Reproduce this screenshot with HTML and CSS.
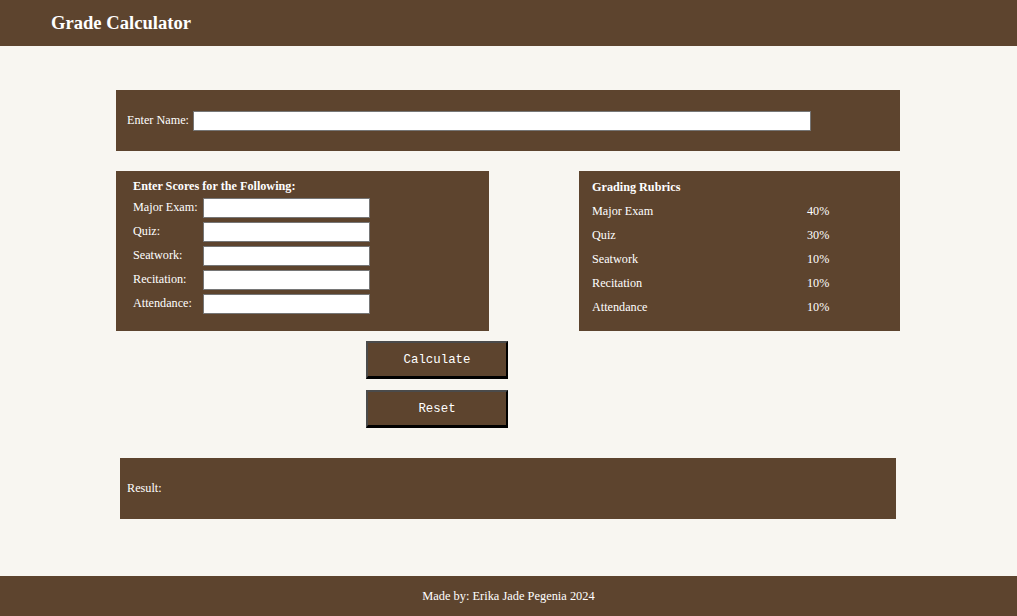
FILE: index.html
```html
<!DOCTYPE html>
<html lang="en">
<head>
    <meta charset="UTF-8">
    <meta name="viewport" content="width=device-width, initial-scale=1.0">
    <title>Grade Calculator</title>
    <link rel="stylesheet" href="styles.css">
</head>
<body>
    <header class="topbar">
        <h1>Grade Calculator</h1>
    </header>

    <main class="content">
        <!-- Name -->
        <div class="panel name-panel">
            <label for="name">Enter Name:</label>
            <input type="text" id="name">
        </div>

        <div class="row">
            <!-- Scores -->
            <div class="panel scores">
                <h3>Enter Scores for the Following:</h3>
                <div class="score-grid">
                    <label for="exam">Major Exam:</label>
                    <input type="number" id="exam">
                    <label for="quiz">Quiz:</label>
                    <input type="number" id="quiz">
                    <label for="seatwork">Seatwork:</label>
                    <input type="number" id="seatwork">
                    <label for="recitation">Recitation:</label>
                    <input type="number" id="recitation">
                    <label for="attendance">Attendance:</label>
                    <input type="number" id="attendance">
                </div>
            </div>

            <!-- Rubrics -->
            <div class="panel rubrics">
                <h3>Grading Rubrics</h3>
                <div class="rubric-grid">
                    <span>Major Exam</span><span>40%</span>
                    <span>Quiz</span><span>30%</span>
                    <span>Seatwork</span><span>10%</span>
                    <span>Recitation</span><span>10%</span>
                    <span>Attendance</span><span>10%</span>
                </div>
            </div>
        </div>

        <div class="actions">
            <button class="button" onclick="calculate()">Calculate</button>
            <button class="button" onclick="resetForm()">Reset</button>
        </div>

        <div class="panel result-panel">
            <span>Result:</span>
            <span id="result"></span>
        </div>
    </main>

    <footer class="footer">Made by: Erika Jade Pegenia 2024</footer>

    <script>
        function calculate() {
            const ids = ['exam', 'quiz', 'seatwork', 'recitation', 'attendance'];
            const weights = [0.4, 0.3, 0.1, 0.1, 0.1];
            let total = 0;
            ids.forEach((id, i) => {
                total += (parseFloat(document.getElementById(id).value) || 0) * weights[i];
            });
            const name = document.getElementById('name').value;
            document.getElementById('result').innerText = ' ' + name + ' ' + total.toFixed(2);
        }

        function resetForm() {
            document.querySelectorAll('input').forEach(input => input.value = '');
            document.getElementById('result').innerText = '';
        }
    </script>
</body>
</html>
```

FILE: styles.css
```css
:root {
    --brown: #5d442e;
    --page-bg: #f8f6f1;
    --text-color: #ffffff;
}

body {
    font-family: 'Liberation Serif', 'Times New Roman', serif;
    font-size: 12.2px;
    background: var(--page-bg);
    color: var(--text-color);
    margin: 0;
    padding-right: 1px;
    min-height: 616px;
    display: flex;
    flex-direction: column;
}

.topbar {
    background: var(--brown);
    height: 46px;
    padding-left: 51px;
    margin-right: -1px;
    display: flex;
    align-items: center;
}

.topbar h1 {
    margin: 0;
    font-size: 18.6px;
    font-weight: bold;
}

.content {
    width: 784px;
    margin: 0 auto;
    padding-top: 44px;
}

.panel {
    background: var(--brown);
    box-sizing: border-box;
}

input {
    box-sizing: border-box;
    border: 1px solid #767676;
    background: #ffffff;
    height: 20px;
    margin: 0;
    padding: 0 2px;
}

/* Name box */
.name-panel {
    height: 61px;
    display: flex;
    align-items: center;
    padding: 0 11px;
    gap: 4px;
}

.name-panel input {
    width: 618px;
}

.row {
    display: flex;
    justify-content: space-between;
    margin-top: 20px;
}

h3 {
    margin: 0;
    font-size: 12.2px;
    font-weight: bold;
}

/* Scores */
.scores {
    width: 373px;
    height: 160px;
    padding: 8px 17px 0;
}

.scores h3 {
    line-height: 15px;
    margin-bottom: 4px;
}

.score-grid {
    display: grid;
    grid-template-columns: 70px 167px;
    row-gap: 4px;
    align-items: center;
}

.score-grid label {
    line-height: 18px;
    align-self: start;
}

/* Rubrics */
.rubrics {
    width: 321px;
    height: 160px;
    padding: 4px 13px 0;
}

.rubrics h3 {
    line-height: 24px;
}

.rubric-grid {
    display: grid;
    grid-template-columns: 215px auto;
    grid-auto-rows: 24px;
    align-items: center;
}

/* Buttons */
.actions {
    display: flex;
    flex-direction: column;
    gap: 11px;
    margin: 10px 0 0 250px;
    width: 142px;
}

.button {
    width: 142px;
    height: 38px;
    background: var(--brown);
    color: var(--text-color);
    font-family: 'Liberation Mono', 'Courier New', monospace;
    font-size: 12.4px;
    padding-top: 1px;
    border-style: solid;
    border-width: 2px 2px 3px 2px;
    border-color: #4b4b4b #000000 #000000 #4b4b4b;
    cursor: pointer;
}

.button:hover {
    background: #6e5139;
}

/* Result */
.result-panel {
    width: 776px;
    height: 61px;
    margin: 30px auto 0;
    display: flex;
    align-items: center;
    padding: 0 7px;
}

.footer {
    margin-top: auto;
    margin-right: -1px;
    background: var(--brown);
    height: 40px;
    font-size: 12.4px;
    display: flex;
    align-items: center;
    justify-content: center;
}
```
